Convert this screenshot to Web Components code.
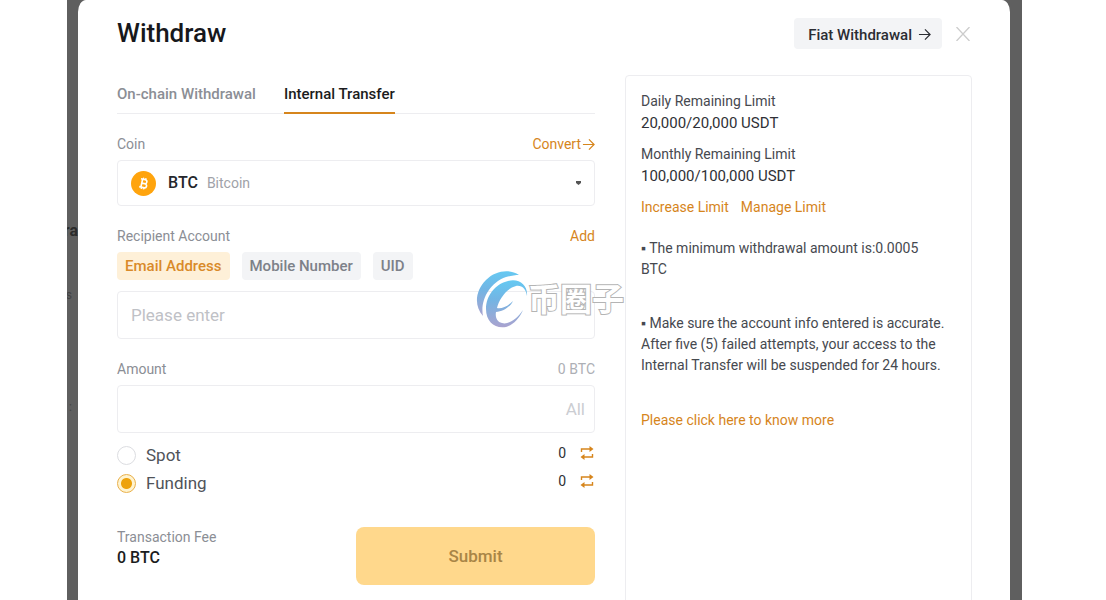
<!DOCTYPE html>
<html lang="en">
<head>
<meta charset="utf-8">
<title>Withdraw</title>
<style>
  body {
    margin: 0;
    height: 100vh;
    overflow: hidden;
    background: #fff;
    color: #46494f;
    font-family: Roboto, "Liberation Sans", "Noto Sans CJK SC", sans-serif;
    font-size: 14px;
    line-height: 20px;
    --accent: #d6851c;
    --muted: #8b8e95;
    --line: #ededf0;
    --chip: #f3f4f6;
  }
</style>
</head>
<body>
<withdraw-page></withdraw-page>

<script>
class BaseElement extends HTMLElement {
  constructor() {
    super();
    this.attachShadow({ mode: 'open' });
    this.shadowRoot.innerHTML = `
      <style>
        * { box-sizing: border-box; }
        button, input, select { font: inherit; color: inherit; margin: 0; }
        button { border: 0; background: none; padding: 0; cursor: pointer; }
        a { color: var(--accent); text-decoration: none; }
        svg { display: block; flex-shrink: 0; }
        ${this.getStyles()}
      </style>
      ${this.getTemplate()}`;
  }
}

const arrow = (size) => `
  <svg width="${size}" height="${size}" viewBox="0 0 14 14" fill="none" stroke="currentColor" stroke-width="1.3" aria-hidden="true">
    <path d="M1 7h11.5M7.5 1.5 13 7l-5.5 5.5"/>
  </svg>`;

class WithdrawPage extends BaseElement {
  getStyles() {
    return `
      :host {
        display: grid;
        grid-template-columns: 11px minmax(0, 1fr) 12px;
        min-height: 100vh;
        margin: 0 84px 0 67px;
        background: #5f5f5f;
      }
      .behind {
        overflow: hidden;
        display: flex;
        flex-direction: column;
        align-items: flex-end;
        padding-top: 221px;
        color: #2c2c2c;
      }
      .behind b { font-size: 16px; }
      .behind span { margin-top: 44px; color: #444; font-size: 12px; margin-right: 6px; }
      .behind span + span { margin-top: 92px; }
    `;
  }

  getTemplate() {
    return `
      <div class="behind" aria-hidden="true"><b>ra</b><span>s</span><span>:</span></div>
      <withdraw-dialog>
        <withdraw-form></withdraw-form>
        <limit-panel slot="side"></limit-panel>
      </withdraw-dialog>
    `;
  }
}

class WithdrawDialog extends BaseElement {
  getStyles() {
    return `
      :host {
        display: block;
        position: relative;
        background: #fff;
        border-radius: 8px 8px 0 0 / 12px 12px 0 0;
        padding: 18px 38px 0 39px;
      }
      header {
        display: flex;
        align-items: center;
        gap: 14px;
        padding-right: 2px;
        margin-bottom: 26px;
      }
      h1 {
        flex: 1;
        margin: 0;
        font-size: 26px;
        line-height: 31px;
        font-weight: 500;
        color: #17181c;
      }
      .fiat {
        display: flex;
        align-items: center;
        gap: 6px;
        height: 31px;
        padding: 2px 11px 0 14px;
        border-radius: 4px;
        background: var(--chip);
        color: #2b2d33;
        font-size: 15px;
        font-weight: 500;
      }
      .close { color: #ccc; }
      .columns {
        display: grid;
        grid-template-columns: minmax(0, 478fr) minmax(0, 347fr);
        gap: 30px;
      }
    `;
  }

  getTemplate() {
    return `
      <header>
        <h1>Withdraw</h1>
        <button class="fiat" type="button">Fiat Withdrawal ${arrow(13)}</button>
        <button class="close" type="button" aria-label="Close">
          <svg width="14" height="14" viewBox="0 0 14 14" fill="none" stroke="currentColor" stroke-width="1.3">
            <path d="M.5 0l13 14M13.5 0l-13 14"/>
          </svg>
        </button>
      </header>
      <div class="columns">
        <slot></slot>
        <slot name="side"></slot>
      </div>
    `;
  }
}

class WithdrawForm extends BaseElement {
  getStyles() {
    return `
      :host { display: block; position: relative; padding-bottom: 32px; }
      nav {
        display: flex;
        gap: 28px;
        height: 39px;
        border-bottom: 1px solid var(--line);
        margin-bottom: 20px;
        font-size: 15px;
        font-weight: 500;
      }
      nav button {
        height: 39px;
        padding-top: 1px;
        color: var(--muted);
        border-bottom: 2px solid transparent;
      }
      nav .active { color: #1b1c20; border-color: var(--accent); }
      .row {
        display: flex;
        justify-content: space-between;
        color: var(--muted);
        margin-bottom: 6px;
      }
      .row a { display: flex; align-items: center; gap: 1px; }
      .field {
        display: flex;
        align-items: center;
        border: 1px solid var(--line);
        border-radius: 4px;
        height: 48px;
        padding: 0 13px;
        margin-bottom: 20px;
      }
      .field.coin { height: 46px; }
      select {
        appearance: none;
        field-sizing: content;
        border: 0;
        background: none;
        padding: 0;
        margin: 0 9px 0 12px;
        outline: none;
        color: #25272c;
        font-size: 16px;
        font-weight: 500;
      }
      .name { flex: 1; color: #a0a2a8; }
      .caret { width: 5px; height: 4px; background: #555; clip-path: polygon(0 0, 100% 0, 100% 50%, 50% 100%, 0 50%); }
      input[type=text] {
        flex: 1;
        min-width: 0;
        border: 0;
        padding: 0;
        outline: none;
        background: none;
        font-size: 17px;
      }
      input::placeholder { color: #bfc1c6; opacity: 1; }
      .all { color: #cbcdd2; font-size: 17px; margin-right: -4px; }
      .chips { display: flex; gap: 12px; margin-bottom: 11px; }
      .chips button {
        height: 28px;
        padding: 0 8px;
        border-radius: 4px;
        background: var(--chip);
        color: #7d8189;
        font-size: 15px;
        font-weight: 500;
      }
      .chips .active { background: #fef0d8; color: #d98a29; }
      .amount { margin-bottom: 8px; }
      .unit { color: #adafb5; }
      .wallet {
        display: flex;
        align-items: flex-start;
        height: 28px;
        color: #2f3136;
      }
      .wallet label {
        flex: 1;
        display: flex;
        align-items: center;
        gap: 10px;
        line-height: 28px;
        font-size: 17px;
        color: #505359;
      }
      .wallet button { color: var(--accent); margin: 5px 1px 0 14px; }
      .wallet output { line-height: 24px; }
      input[type=radio] {
        appearance: none;
        width: 19px;
        height: 19px;
        border: 1px solid #dcdde1;
        border-radius: 50%;
      }
      input[type=radio]:checked {
        border-color: #e9b04a;
        background: radial-gradient(circle, #eda20c 0 5px, #fff3cf 6px);
      }
      footer {
        display: flex;
        justify-content: space-between;
        margin-top: 30px;
        color: var(--muted);
      }
      footer strong { display: block; line-height: 22px; font-size: 16px; font-weight: 500; color: #1b1c20; }
      .submit {
        width: 50%;
        height: 58px;
        border-radius: 8px;
        background: #ffd88c;
        color: #a98546;
        font-size: 17px;
        font-weight: 500;
      }
      water-mark { position: absolute; right: -29px; top: 195px; }
    `;
  }

  getWallet(id, name, checked = '') {
    return `
      <div class="wallet">
        <label for="${id}"><input type="radio" name="wallet" id="${id}" ${checked}>${name}</label>
        <output>0</output>
        <button type="button" aria-label="Transfer from ${name}">
          <svg width="14" height="14" viewBox="0 0 14 14" fill="none" stroke="currentColor" stroke-width="1.4">
            <path d="M1.500 6V3H11M12.500 8v3H3"/>
            <path d="M9.500 0 13.500 3 9.500 6zM4.500 8 .5 11 4.500 14z" fill="currentColor" stroke="none"/>
          </svg>
        </button>
      </div>`;
  }

  getTemplate() {
    return `
      <nav>
        <button type="button">On-chain Withdrawal</button>
        <button type="button" class="active">Internal Transfer</button>
      </nav>

      <div class="row"><label for="coin">Coin</label><a href="#convert">Convert${arrow(13)}</a></div>
      <div class="field coin">
        <svg width="25" height="25" viewBox="0 0 25 25" aria-hidden="true">
          <circle cx="12.5" cy="12.5" r="12.5" fill="#ffa40d"/>
          <g transform="rotate(13 12.5 12.5)" fill="none" stroke="#fff" stroke-width="1.6">
            <path d="M9 8.500h4.500a1.900 1.900 0 0 1 0 3.900h-3M10.700 8.500v8M9 16.500h5a2 2 0 0 0 0-4.100h-3M11.500 6.800v1.700M13.800 6.800v1.700M11.500 16.500v1.800M13.800 16.500v1.800"/>
          </g>
        </svg>
        <select id="coin"><option>BTC</option></select>
        <span class="name">Bitcoin</span>
        <span class="caret"></span>
      </div>

      <div class="row"><label for="account">Recipient Account</label><a href="#add">Add</a></div>
      <div class="chips">
        <button type="button" class="active">Email Address</button>
        <button type="button">Mobile Number</button>
        <button type="button">UID</button>
      </div>
      <div class="field"><input type="text" id="account" placeholder="Please enter"></div>

      <div class="row"><label for="amount">Amount</label><span class="unit">0 BTC</span></div>
      <div class="field amount">
        <input type="text" id="amount">
        <button type="button" class="all">All</button>
      </div>
      ${this.getWallet('spot', 'Spot')}
      ${this.getWallet('funding', 'Funding', 'checked')}

      <footer>
        <div>Transaction Fee<strong>0 BTC</strong></div>
        <button type="button" class="submit">Submit</button>
      </footer>
      <water-mark></water-mark>
    `;
  }
}

class LimitPanel extends BaseElement {
  getStyles() {
    return `
      :host {
        display: block;
        box-sizing: border-box;
        border: 1px solid var(--line);
        border-radius: 4px;
        padding: 14px 14px 0 15px;
        line-height: 22px;
      }
      dl, dd, p { margin: 0; }
      dd { margin-bottom: 9px; color: #2f3136; font-size: 15px; }
      .links { display: flex; gap: 12px; margin-bottom: 20px; }
      p { line-height: 21px; margin-bottom: 33px; }
    `;
  }

  getTemplate() {
    return `
      <dl>
        <dt>Daily Remaining Limit</dt>
        <dd>20,000/20,000 USDT</dd>
        <dt>Monthly Remaining Limit</dt>
        <dd>100,000/100,000 USDT</dd>
      </dl>
      <div class="links"><a href="#increase">Increase Limit</a><a href="#manage">Manage Limit</a></div>
      <p>▪ The minimum withdrawal amount is:0.0005<br>BTC</p>
      <p>▪ Make sure the account info entered is accurate. After five (5) failed attempts, your access to the Internal Transfer will be suspended for 24 hours.</p>
      <a href="#more">Please click here to know more</a>
    `;
  }
}

class WaterMark extends BaseElement {
  getStyles() {
    return `
      :host { display: flex; align-items: center; pointer-events: none; }
      span {
        font: 700 32px/32px "Noto Sans CJK SC", sans-serif;
        color: #fff;
        -webkit-text-stroke: 2px #b4b4b4;
        paint-order: stroke fill;
        margin-bottom: 6px;
      }
    `;
  }

  getTemplate() {
    return `
      <svg width="52" height="60" viewBox="0 0 52 60" aria-hidden="true">
        <defs>
          <linearGradient id="fade" x1="0" y1="0" x2="0" y2="1">
            <stop offset="0" stop-color="#66c9f2"/>
            <stop offset=".4" stop-color="#72b5e4"/>
            <stop offset="1" stop-color="#aaa3cf"/>
          </linearGradient>
        </defs>
        <g fill="url(#fade)">
          <path d="M43 5C34-1 20 0 10 10-1 21-2 36 7 46 4 31 13 13 30 7c4-1 9-2 13-2z"/>
          <path d="M51 26C52 15 43 8 32 11 19 14 10 26 10 39c0 13 9 20 20 18 7-2 13-8 17-17-6 9-15 15-21 13-5-1-7-6-6-11 7 0 15-6 17-11-5 5-11 8-16 7 2-9 10-20 19-22 6-1 10 3 11 10z"/>
        </g>
      </svg>
      <span>币圈子</span>
    `;
  }
}

customElements.define('water-mark', WaterMark);
customElements.define('limit-panel', LimitPanel);
customElements.define('withdraw-form', WithdrawForm);
customElements.define('withdraw-dialog', WithdrawDialog);
customElements.define('withdraw-page', WithdrawPage);
</script>
</body>
</html>
